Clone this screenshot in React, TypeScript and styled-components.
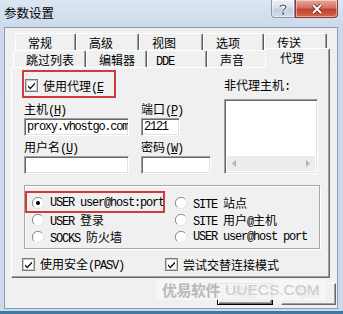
import React from 'react';
import styled, { createGlobalStyle } from 'styled-components';

const CJK = `"Noto Sans CJK SC", "Noto Sans", sans-serif`;
const MONO = `"Liberation Mono", "DejaVu Sans Mono", monospace`;

const GlobalStyle = createGlobalStyle`
  html, body { margin: 0; padding: 0; background: #fff; }
  body { width: 343px; height: 314px; overflow: hidden; }
  * { box-sizing: border-box; }
`;

const Window = styled.div`
  position: relative;
  width: 343px;
  height: 314px;
  display: flex;
  flex-direction: column;
  padding: 0 5px 2px 4px;
  background: linear-gradient(#dde7f3, #cbd9ea 27px, #ccdaeb);
  border-bottom: 3px solid #3d7aa3;
  font-family: ${CJK};
  font-size: 12px;
  color: #000;
  overflow: hidden;
`;

const Caption = styled.div`
  height: 27px;
  flex-shrink: 0;
  display: flex;
  align-items: flex-start;
`;

const Title = styled.div`
  line-height: 26px;
  font-size: 12.5px;
  color: #000;
`;

const CaptionButtons = styled.div`
  margin-left: auto;
  display: flex;
`;

const CapButton = styled.div<{ $close?: boolean }>`
  width: ${(p) => (p.$close ? 43 : 24)}px;
  height: 18px;
  display: flex;
  align-items: center;
  justify-content: center;
  border: 1px solid ${(p) => (p.$close ? '#8a3a32' : '#8797ab')};
  border-top: none;
  border-radius: ${(p) => (p.$close ? '0 0 4px 0' : '0 0 0 4px')};
  background: ${(p) =>
    p.$close
      ? 'linear-gradient(#e8a89e, #d47264 45%, #c4402e 55%, #d2684f)'
      : 'linear-gradient(#eef2f8, #d7e0ec 45%, #c3cfdf 55%, #d3dcea)'};
  box-shadow: inset 0 0 0 1px rgba(255, 255, 255, 0.45);
`;

const Client = styled.div`
  flex: 1;
  background: #f0f0f0;
  border: 1px solid #8c9cb0;
  display: flex;
  flex-direction: column;
  padding: 5px 0 0 6px;
`;

const TabControl = styled.div`
  width: 319px;
  display: flex;
  flex-direction: column;
`;

const TabRow = styled.div<{ $indent: number }>`
  height: 17px;
  display: flex;
  align-items: flex-end;
  padding-left: ${(p) => p.$indent}px;
`;

const Tab = styled.div<{ $w: number; $pad?: number; $active?: boolean }>`
  position: relative;
  z-index: ${(p) => (p.$active ? 2 : 0)};
  width: ${(p) => p.$w + (p.$active ? 4 : 0)}px;
  height: ${(p) => (p.$active ? 20 : 17)}px;
  margin: ${(p) => (p.$active ? '-2px -2px -1px -2px' : '0')};
  padding-left: ${(p) => (p.$pad ?? 12) + (p.$active ? 2 : 0)}px;
  padding-top: 2px;
  line-height: 13px;
  white-space: nowrap;
  background: #f0f0f0;
  border-top: 1px solid #fff;
  border-left: 1px solid #fff;
  border-right: 1px solid #5f5f5f;
  border-radius: 2px 2px 0 0;
  box-shadow: inset -1px 0 0 #a0a0a0;
`;

const Panel = styled.div`
  position: relative;
  z-index: 1;
  height: 211px;
  border: 1px solid;
  border-color: #fff #696969 #696969 #fff;
  box-shadow: inset -1px -1px 0 #a0a0a0;
  padding: 2px 10px 0 10px;
  display: flex;
  flex-direction: column;
`;

const TopSection = styled.div`
  display: flex;
  height: 104px;
`;

const LeftBlock = styled.div`
  width: 190px;
  display: flex;
  flex-direction: column;
`;

const RedFrame = styled.div`
  width: 94px;
  height: 28px;
  border: 2px solid #cf3b3b;
  display: flex;
  align-items: center;
  padding: 3px 0 0 1px;
  overflow: hidden;
  white-space: nowrap;
`;

const FieldGrid = styled.div`
  margin: 4px 0 0 2px;
  display: grid;
  grid-template-columns: 105px 70px;
  column-gap: 12px;
  grid-template-rows: 16px 18px 20px 18px;
  align-items: start;
`;

const Label = styled.div<{ $row: number }>`
  grid-row: ${(p) => p.$row};
  align-self: ${(p) => (p.$row === 1 ? 'start' : 'end')};
  line-height: 14px;
  white-space: nowrap;
`;

const Acc = styled.span`
  font-family: ${MONO};
  font-size: 12px;
  letter-spacing: -1.2px;
`;

const Key = styled.span`
  text-decoration: underline;
`;

const TextBox = styled.div<{ $w: number; $row: number }>`
  grid-row: ${(p) => p.$row};
  width: ${(p) => p.$w}px;
  height: 18px;
  background: #fff;
  border: 1px solid;
  border-color: #a0a0a0 #fff #fff #a0a0a0;
  box-shadow: inset 1px 1px 0 #696969, inset -1px -1px 0 #e3e3e3;
  padding: 0 0 0 2px;
  font-family: ${MONO};
  font-size: 12px;
  letter-spacing: -1.25px;
  line-height: 16px;
  white-space: nowrap;
  overflow: hidden;
`;

const RightBlock = styled.div`
  margin-left: 12px;
  width: 94px;
  padding-top: 8px;
  display: flex;
  flex-direction: column;
`;

const ListBox = styled.div`
  margin-top: 5px;
  height: 76px;
  background: #fff;
  border: 1px solid;
  border-color: #a0a0a0 #fff #fff #a0a0a0;
  box-shadow: inset 1px 1px 0 #696969, inset -1px -1px 0 #e3e3e3;
  padding: 2px;
  display: flex;
  flex-direction: column;
  justify-content: flex-end;
`;

const HScroll = styled.div`
  height: 15px;
  background: #ececec;
  display: flex;
  align-items: center;
  justify-content: space-between;
  padding: 0 5px;
`;

const GroupBox = styled.div`
  margin: 11px 0 0 2px;
  width: 296px;
  height: 64px;
  border: 1px solid #a8a8a8;
  box-shadow: inset 1px 1px 0 #fff, 1px 1px 0 #fff;
  padding: 8px 0 0 7px;
  display: grid;
  grid-template-columns: 143px auto;
  grid-auto-rows: 17px;
`;

const Option = styled.div<{ $marked?: boolean }>`
  position: relative;
  display: flex;
  align-items: center;
  gap: 6px;
  white-space: nowrap;
  &::after {
    content: '';
    display: ${(p) => (p.$marked ? 'block' : 'none')};
    position: absolute;
    top: -3px;
    left: -7px;
    right: 10px;
    bottom: -2px;
    border: 2px solid #cf3b3b;
    pointer-events: none;
  }
`;

const CheckRow = styled.div`
  margin-top: 6px;
  display: grid;
  grid-template-columns: 143px auto;
  height: 14px;
`;

const CheckItem = styled.div`
  display: flex;
  align-items: center;
  gap: 5px;
  white-space: nowrap;
`;

const ButtonRow = styled.div`
  margin-top: 5px;
  height: 22px;
  width: 325px;
  display: flex;
  justify-content: flex-end;
  gap: 8px;
`;

const Button = styled.div<{ $default?: boolean }>`
  width: ${(p) => (p.$default ? 56 : 55)}px;
  height: 22px;
  background: #f0f0f0;
  border: 1px solid;
  border-color: ${(p) => (p.$default ? '#000' : '#fff #696969 #696969 #fff')};
  box-shadow: ${(p) =>
    p.$default
      ? 'inset 1px 1px 0 #fff, inset -1px -1px 0 #696969, inset -2px -2px 0 #a0a0a0'
      : 'inset -1px -1px 0 #a0a0a0'};
  display: flex;
  align-items: flex-start;
  justify-content: center;
  line-height: 16px;
  position: relative;
  &::after {
    content: '';
    display: ${(p) => (p.$default ? 'block' : 'none')};
    position: absolute;
    inset: 4px;
    border: 1px dotted #000;
  }
`;

const Watermark = styled.div`
  position: absolute;
  left: 156px;
  top: 279px;
  padding: 0 6px;
  height: 21px;
  display: flex;
  align-items: center;
  gap: 5px;
  background: rgba(246, 246, 246, 0.93);
  font-weight: 700;
  white-space: nowrap;
`;

const WatermarkCJK = styled.span`
  font-family: ${CJK};
  font-size: 15px;
  letter-spacing: -0.5px;
  color: #b9b9b9;
`;

const WatermarkLatin = styled.span`
  font-family: "Liberation Sans", Arial, sans-serif;
  font-weight: 400;
  font-size: 15.5px;
  color: #cacaca;
`;

const CheckBox = ({ checked = true }: { checked?: boolean }) => (
  <svg width="13" height="13" viewBox="0 0 13 13" style={{ flexShrink: 0 }}>
    <rect x="0.5" y="0.5" width="12" height="12" fill="#fff" stroke="#7a7a7a" />
    <rect x="1.5" y="1.5" width="10" height="10" fill="none" stroke="#c8c8c8" />
    {checked && <path d="M3 6.2 L5.2 8.6 L10 3.6 L10 5.4 L5.2 10.4 L3 8 Z" fill="#111" />}
  </svg>
);

const Radio = ({ checked = false }: { checked?: boolean }) => (
  <svg width="12" height="12" viewBox="0 0 12 12" style={{ flexShrink: 0 }}>
    <circle cx="6" cy="6" r="5.5" fill="#fff" />
    <path d="M10 2 A5.5 5.5 0 0 0 2 10" fill="none" stroke="#8a8a8a" strokeWidth="1" />
    <path d="M2 10 A5.5 5.5 0 0 0 10 2" fill="none" stroke="#e4e4e4" strokeWidth="1" />
    {checked && <circle cx="6" cy="6" r="2" fill="#000" />}
  </svg>
);

const rowOne = [
  { t: '常规', w: 61 },
  { t: '高级', w: 63 },
  { t: '视图', w: 64 },
  { t: '选项', w: 61 },
  { t: '传送', w: 63 },
];

const rowTwo = [
  { t: '跳过列表', w: 73 },
  { t: '编辑器', w: 61 },
  { t: 'DDE', w: 60, pad: 8 },
  { t: '声音', w: 60 },
];

export default function App() {
  return (
    <>
      <GlobalStyle />
      <Window>
        <Caption>
          <Title>参数设置</Title>
          <CaptionButtons>
            <CapButton>
              <svg width="10" height="12" viewBox="0 0 10 12">
                <path
                  d="M2 4 C2 1.5 8 1.5 8 4 C8 6 5 6 5 8.2"
                  fill="none"
                  stroke="#fff"
                  strokeWidth="3"
                />
                <path
                  d="M2 4 C2 1.5 8 1.5 8 4 C8 6 5 6 5 8.2"
                  fill="none"
                  stroke="#55627a"
                  strokeWidth="1.4"
                />
                <rect x="4" y="9.5" width="2" height="2" fill="#55627a" />
              </svg>
            </CapButton>
            <CapButton $close>
              <svg width="14" height="12" viewBox="0 0 14 12">
                <path d="M3 2 L11 10 M11 2 L3 10" stroke="#6a2a22" strokeWidth="3.6" />
                <path d="M3 2 L11 10 M11 2 L3 10" stroke="#fff" strokeWidth="2" />
              </svg>
            </CapButton>
          </CaptionButtons>
        </Caption>
        <Client>
          <TabControl>
            <TabRow $indent={4}>
              {rowOne.map((t) => (
                <Tab key={t.t} $w={t.w}>
                  {t.t}
                </Tab>
              ))}
            </TabRow>
            <TabRow $indent={2}>
              {rowTwo.map((t) => (
                <Tab key={t.t} $w={t.w} $pad={t.pad}>
                  {t.t === 'DDE' ? <Acc>DDE</Acc> : t.t}
                </Tab>
              ))}
              <Tab $w={61} $active>
                代理
              </Tab>
            </TabRow>
            <Panel>
              <TopSection>
                <LeftBlock>
                  <RedFrame>
                    <CheckItem>
                      <CheckBox />
                      <span>
                        使用代理<Acc>(</Acc>
                        <Acc>
                          <Key>E</Key>
                        </Acc>
                      </span>
                    </CheckItem>
                  </RedFrame>
                  <FieldGrid>
                    <Label $row={1}>
                      主机<Acc>(<Key>H</Key>)</Acc>
                    </Label>
                    <Label $row={1}>
                      端口<Acc>(<Key>P</Key>)</Acc>
                    </Label>
                    <TextBox $w={105} $row={2}>
                      proxy.vhostgo.com
                    </TextBox>
                    <TextBox $w={39} $row={2}>
                      2121
                    </TextBox>
                    <Label $row={3}>
                      用户名<Acc>(<Key>U</Key>)</Acc>
                    </Label>
                    <Label $row={3}>
                      密码<Acc>(<Key>W</Key>)</Acc>
                    </Label>
                    <TextBox $w={105} $row={4} />
                    <TextBox $w={70} $row={4} />
                  </FieldGrid>
                </LeftBlock>
                <RightBlock>
                  <Label $row={1}>
                    非代理主机<Acc>:</Acc>
                  </Label>
                  <ListBox>
                    <HScroll>
                      <svg width="4" height="7" viewBox="0 0 4 7">
                        <path d="M4 0 L0 3.5 L4 7 Z" fill="#b4b4b4" />
                      </svg>
                      <svg width="4" height="7" viewBox="0 0 4 7">
                        <path d="M0 0 L4 3.5 L0 7 Z" fill="#b4b4b4" />
                      </svg>
                    </HScroll>
                  </ListBox>
                </RightBlock>
              </TopSection>
              <GroupBox>
                <Option $marked>
                  <Radio checked />
                  <Acc>USER user@host:port</Acc>
                </Option>
                <Option>
                  <Radio />
                  <span>
                    <Acc>SITE </Acc>站点
                  </span>
                </Option>
                <Option>
                  <Radio />
                  <span>
                    <Acc>USER </Acc>登录
                  </span>
                </Option>
                <Option>
                  <Radio />
                  <span>
                    <Acc>SITE </Acc>用户<Acc>@</Acc>主机
                  </span>
                </Option>
                <Option>
                  <Radio />
                  <span>
                    <Acc>SOCKS </Acc>防火墙
                  </span>
                </Option>
                <Option>
                  <Radio />
                  <Acc>USER user@host port</Acc>
                </Option>
              </GroupBox>
              <CheckRow>
                <CheckItem>
                  <CheckBox />
                  <span>
                    使用安全<Acc>(PASV)</Acc>
                  </span>
                </CheckItem>
                <CheckItem>
                  <CheckBox />
                  <span>尝试交替连接模式</span>
                </CheckItem>
              </CheckRow>
            </Panel>
          </TabControl>
          <ButtonRow>
            <Button $default>确定</Button>
            <Button>取消</Button>
          </ButtonRow>
        </Client>
        <Watermark>
          <WatermarkCJK>优易软件</WatermarkCJK>
          <WatermarkLatin>UUECS.COM</WatermarkLatin>
        </Watermark>
      </Window>
    </>
  );
}
